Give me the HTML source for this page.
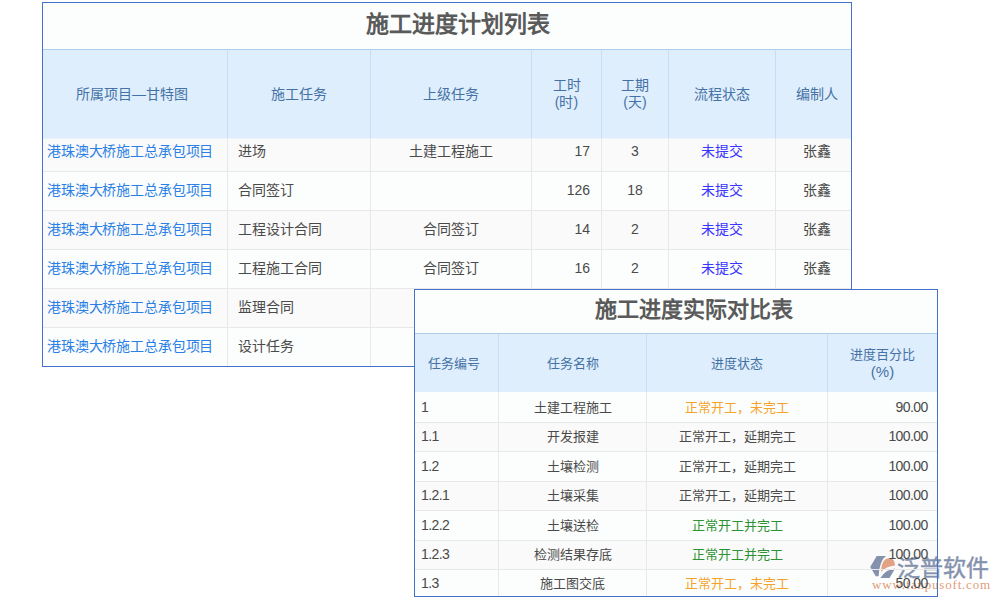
<!DOCTYPE html>
<html lang="zh-CN"><head><meta charset="utf-8">
<style>
html,body{margin:0;padding:0;background:#fff;width:1000px;height:600px;overflow:hidden;position:relative;font-family:"Liberation Sans",sans-serif;}
.a{position:absolute;box-sizing:border-box;}
.c{position:absolute;display:flex;align-items:center;justify-content:center;box-sizing:border-box;color:#4a4a4a;white-space:nowrap;line-height:17px;text-align:center;}
.t1{font-size:14px;}
.t2{font-size:13px;}
.n{font-size:14px;}
.l{justify-content:flex-start;}
.r{justify-content:flex-end;}
.h{color:#4572a6;}
.lk{color:#2a80e6;}
.blu{color:#3a34ff;}
.org{color:#f4a22a;}
.grn{color:#2c9232;}
.ttl{font-weight:bold;color:#5a5a5a;}
</style></head><body>

<div class="a" style="left:42px;top:2px;width:810px;height:365px;background:#fcfefd;"></div>
<div class="a" style="left:43px;top:49px;width:808px;height:89px;background:#dfeefc;"></div>
<div class="a" style="left:43px;top:49px;width:808px;height:1px;background:#acd0ee;"></div>
<div class="a" style="left:43px;top:138px;width:808px;height:33px;background:#fafafa;"></div>
<div class="a" style="left:43px;top:210px;width:808px;height:39px;background:#fafafa;"></div>
<div class="a" style="left:43px;top:288px;width:808px;height:39px;background:#fafafa;"></div>
<div class="a" style="left:43px;top:138px;width:808px;height:1px;background:#ecf4fb;"></div>
<div class="a" style="left:43px;top:171px;width:808px;height:1px;background:#e8e8e8;"></div>
<div class="a" style="left:43px;top:210px;width:808px;height:1px;background:#e8e8e8;"></div>
<div class="a" style="left:43px;top:249px;width:808px;height:1px;background:#e8e8e8;"></div>
<div class="a" style="left:43px;top:288px;width:808px;height:1px;background:#e8e8e8;"></div>
<div class="a" style="left:43px;top:327px;width:808px;height:1px;background:#e8e8e8;"></div>
<div class="a" style="left:227px;top:50px;width:1px;height:88px;background:#c9deef;"></div>
<div class="a" style="left:227px;top:138px;width:1px;height:228px;background:#e8e8e8;"></div>
<div class="a" style="left:370px;top:50px;width:1px;height:88px;background:#c9deef;"></div>
<div class="a" style="left:370px;top:138px;width:1px;height:228px;background:#e8e8e8;"></div>
<div class="a" style="left:531px;top:50px;width:1px;height:88px;background:#c9deef;"></div>
<div class="a" style="left:531px;top:138px;width:1px;height:228px;background:#e8e8e8;"></div>
<div class="a" style="left:601px;top:50px;width:1px;height:88px;background:#c9deef;"></div>
<div class="a" style="left:601px;top:138px;width:1px;height:228px;background:#e8e8e8;"></div>
<div class="a" style="left:668px;top:50px;width:1px;height:88px;background:#c9deef;"></div>
<div class="a" style="left:668px;top:138px;width:1px;height:228px;background:#e8e8e8;"></div>
<div class="a" style="left:775px;top:50px;width:1px;height:88px;background:#c9deef;"></div>
<div class="a" style="left:775px;top:138px;width:1px;height:228px;background:#e8e8e8;"></div>
<div class="a" style="left:42px;top:2px;width:810px;height:365px;background:transparent;border:1px solid #4472c8;"></div>
<div class="c ttl" style="left:43px;top:3px;width:808px;height:46px;font-size:23px;padding-left:22px;padding-bottom:3px;">施工进度计划列表</div>
<div class="c t1 h" style="left:43px;top:50px;width:184px;height:88px;padding-right:6px;">所属项目—甘特图</div>
<div class="c t1 h" style="left:228px;top:50px;width:142px;height:88px;">施工任务</div>
<div class="c t1 h" style="left:371px;top:50px;width:160px;height:88px;">上级任务</div>
<div class="c t1 h" style="left:532px;top:50px;width:69px;height:88px;">工时<br>(时)</div>
<div class="c t1 h" style="left:602px;top:50px;width:66px;height:88px;">工期<br>(天)</div>
<div class="c t1 h" style="left:669px;top:50px;width:106px;height:88px;">流程状态</div>
<div class="c t1 h" style="left:776px;top:50px;width:75px;height:88px;padding-left:6px;">编制人</div>
<div class="c t1 lk l" style="left:43px;top:132px;width:184px;height:39px;padding-left:4px;letter-spacing:-0.15px;">港珠澳大桥施工总承包项目</div>
<div class="c t1 l" style="left:228px;top:132px;width:142px;height:39px;padding-left:10px;">进场</div>
<div class="c t1" style="left:371px;top:132px;width:160px;height:39px;">土建工程施工</div>
<div class="c n r" style="left:532px;top:132px;width:69px;height:39px;padding-right:11px;">17</div>
<div class="c n" style="left:602px;top:132px;width:66px;height:39px;">3</div>
<div class="c t1 blu" style="left:669px;top:132px;width:106px;height:39px;">未提交</div>
<div class="c t1" style="left:776px;top:132px;width:75px;height:39px;padding-left:6px;">张鑫</div>
<div class="c t1 lk l" style="left:43px;top:171px;width:184px;height:39px;padding-left:4px;letter-spacing:-0.15px;">港珠澳大桥施工总承包项目</div>
<div class="c t1 l" style="left:228px;top:171px;width:142px;height:39px;padding-left:10px;">合同签订</div>
<div class="c n r" style="left:532px;top:171px;width:69px;height:39px;padding-right:11px;">126</div>
<div class="c n" style="left:602px;top:171px;width:66px;height:39px;">18</div>
<div class="c t1 blu" style="left:669px;top:171px;width:106px;height:39px;">未提交</div>
<div class="c t1" style="left:776px;top:171px;width:75px;height:39px;padding-left:6px;">张鑫</div>
<div class="c t1 lk l" style="left:43px;top:210px;width:184px;height:39px;padding-left:4px;letter-spacing:-0.15px;">港珠澳大桥施工总承包项目</div>
<div class="c t1 l" style="left:228px;top:210px;width:142px;height:39px;padding-left:10px;">工程设计合同</div>
<div class="c t1" style="left:371px;top:210px;width:160px;height:39px;">合同签订</div>
<div class="c n r" style="left:532px;top:210px;width:69px;height:39px;padding-right:11px;">14</div>
<div class="c n" style="left:602px;top:210px;width:66px;height:39px;">2</div>
<div class="c t1 blu" style="left:669px;top:210px;width:106px;height:39px;">未提交</div>
<div class="c t1" style="left:776px;top:210px;width:75px;height:39px;padding-left:6px;">张鑫</div>
<div class="c t1 lk l" style="left:43px;top:249px;width:184px;height:39px;padding-left:4px;letter-spacing:-0.15px;">港珠澳大桥施工总承包项目</div>
<div class="c t1 l" style="left:228px;top:249px;width:142px;height:39px;padding-left:10px;">工程施工合同</div>
<div class="c t1" style="left:371px;top:249px;width:160px;height:39px;">合同签订</div>
<div class="c n r" style="left:532px;top:249px;width:69px;height:39px;padding-right:11px;">16</div>
<div class="c n" style="left:602px;top:249px;width:66px;height:39px;">2</div>
<div class="c t1 blu" style="left:669px;top:249px;width:106px;height:39px;">未提交</div>
<div class="c t1" style="left:776px;top:249px;width:75px;height:39px;padding-left:6px;">张鑫</div>
<div class="c t1 lk l" style="left:43px;top:288px;width:184px;height:39px;padding-left:4px;letter-spacing:-0.15px;">港珠澳大桥施工总承包项目</div>
<div class="c t1 l" style="left:228px;top:288px;width:142px;height:39px;padding-left:10px;">监理合同</div>
<div class="c t1 lk l" style="left:43px;top:327px;width:184px;height:39px;padding-left:4px;letter-spacing:-0.15px;">港珠澳大桥施工总承包项目</div>
<div class="c t1 l" style="left:228px;top:327px;width:142px;height:39px;padding-left:10px;">设计任务</div>
<div class="a" style="left:414px;top:289px;width:524px;height:308px;background:#fcfefd;"></div>
<div class="a" style="left:415px;top:333px;width:522px;height:59px;background:#dfeefc;"></div>
<div class="a" style="left:415px;top:333px;width:522px;height:1px;background:#acd0ee;"></div>
<div class="a" style="left:415px;top:422px;width:522px;height:29px;background:#fafafa;"></div>
<div class="a" style="left:415px;top:481px;width:522px;height:29px;background:#fafafa;"></div>
<div class="a" style="left:415px;top:540px;width:522px;height:29px;background:#fafafa;"></div>
<div class="a" style="left:866px;top:550px;width:134px;height:46px;">
<svg width="35" height="32" viewBox="0 0 35 32" style="position:absolute;left:0;top:0;overflow:visible">
<path d="M10.7 6.1 L20 6.1 Q13.5 10.5 12.6 26.3 L9.8 26.3 L4.2 17 Z" fill="#8592ad"/>
<path d="M14.9 21.9 Q15.3 9.2 22.8 8 Q28.8 8.3 29.1 15.5 Q20 16.3 14.9 21.9 Z" fill="#e2a283"/>
<path d="M14.4 28 L23.5 28 L29.1 18.4 Q19.5 19.2 14.4 28 Z" fill="#8592ad"/>
</svg>
<div style="position:absolute;left:30.5px;top:3.8px;font-size:23px;line-height:28px;font-weight:400;-webkit-text-stroke:0.45px #8592ad;color:#8592ad;white-space:nowrap;letter-spacing:0px;">泛普软件</div>
<div style="position:absolute;left:6px;top:27.6px;font-family:'Liberation Serif',serif;font-size:13px;line-height:14px;color:#e09c7c;white-space:nowrap;letter-spacing:0.8px;">www.fanpusoft.com</div>
</div>
<div class="a" style="left:415px;top:422px;width:522px;height:1px;background:#e8e8e8;"></div>
<div class="a" style="left:415px;top:451px;width:522px;height:1px;background:#e8e8e8;"></div>
<div class="a" style="left:415px;top:481px;width:522px;height:1px;background:#e8e8e8;"></div>
<div class="a" style="left:415px;top:510px;width:522px;height:1px;background:#e8e8e8;"></div>
<div class="a" style="left:415px;top:540px;width:522px;height:1px;background:#e8e8e8;"></div>
<div class="a" style="left:415px;top:569px;width:522px;height:1px;background:#e8e8e8;"></div>
<div class="a" style="left:498px;top:334px;width:1px;height:58px;background:#c9deef;"></div>
<div class="a" style="left:498px;top:392px;width:1px;height:204px;background:#e8e8e8;"></div>
<div class="a" style="left:646px;top:334px;width:1px;height:58px;background:#c9deef;"></div>
<div class="a" style="left:646px;top:392px;width:1px;height:204px;background:#e8e8e8;"></div>
<div class="a" style="left:827px;top:334px;width:1px;height:58px;background:#c9deef;"></div>
<div class="a" style="left:827px;top:392px;width:1px;height:204px;background:#e8e8e8;"></div>
<div class="a" style="left:414px;top:289px;width:524px;height:308px;background:transparent;border:1px solid #4472c8;"></div>
<div class="c ttl" style="left:415px;top:290px;width:522px;height:43px;font-size:22px;padding-left:36px;padding-bottom:4px;">施工进度实际对比表</div>
<div class="c t2 h" style="left:415px;top:334px;width:83px;height:58px;padding-right:5px;">任务编号</div>
<div class="c t2 h" style="left:499px;top:334px;width:147px;height:58px;">任务名称</div>
<div class="c t2 h" style="left:647px;top:334px;width:180px;height:58px;">进度状态</div>
<div class="c t2 h" style="left:828px;top:334px;width:109px;height:58px;"><div>进度百分比<br><span style="font-size:15px">(%)</span></div></div>
<div class="c n l" style="left:415px;top:392px;width:83px;height:30px;padding-left:6px;letter-spacing:-0.6px;">1</div>
<div class="c t2" style="left:499px;top:392px;width:147px;height:30px;">土建工程施工</div>
<div class="c t2 org" style="left:647px;top:392px;width:180px;height:30px;">正常开工，未完工</div>
<div class="c n r" style="left:828px;top:392px;width:109px;height:30px;padding-right:9.4px;letter-spacing:-0.6px;">90.00</div>
<div class="c n l" style="left:415px;top:422px;width:83px;height:29px;padding-left:6px;letter-spacing:-0.6px;">1.1</div>
<div class="c t2" style="left:499px;top:422px;width:147px;height:29px;">开发报建</div>
<div class="c t2 " style="left:647px;top:422px;width:180px;height:29px;">正常开工，延期完工</div>
<div class="c n r" style="left:828px;top:422px;width:109px;height:29px;padding-right:9.4px;letter-spacing:-0.6px;">100.00</div>
<div class="c n l" style="left:415px;top:451px;width:83px;height:30px;padding-left:6px;letter-spacing:-0.6px;">1.2</div>
<div class="c t2" style="left:499px;top:451px;width:147px;height:30px;">土壤检测</div>
<div class="c t2 " style="left:647px;top:451px;width:180px;height:30px;">正常开工，延期完工</div>
<div class="c n r" style="left:828px;top:451px;width:109px;height:30px;padding-right:9.4px;letter-spacing:-0.6px;">100.00</div>
<div class="c n l" style="left:415px;top:481px;width:83px;height:29px;padding-left:6px;letter-spacing:-0.6px;">1.2.1</div>
<div class="c t2" style="left:499px;top:481px;width:147px;height:29px;">土壤采集</div>
<div class="c t2 " style="left:647px;top:481px;width:180px;height:29px;">正常开工，延期完工</div>
<div class="c n r" style="left:828px;top:481px;width:109px;height:29px;padding-right:9.4px;letter-spacing:-0.6px;">100.00</div>
<div class="c n l" style="left:415px;top:510px;width:83px;height:30px;padding-left:6px;letter-spacing:-0.6px;">1.2.2</div>
<div class="c t2" style="left:499px;top:510px;width:147px;height:30px;">土壤送检</div>
<div class="c t2 grn" style="left:647px;top:510px;width:180px;height:30px;">正常开工并完工</div>
<div class="c n r" style="left:828px;top:510px;width:109px;height:30px;padding-right:9.4px;letter-spacing:-0.6px;">100.00</div>
<div class="c n l" style="left:415px;top:540px;width:83px;height:29px;padding-left:6px;letter-spacing:-0.6px;">1.2.3</div>
<div class="c t2" style="left:499px;top:540px;width:147px;height:29px;">检测结果存底</div>
<div class="c t2 grn" style="left:647px;top:540px;width:180px;height:29px;">正常开工并完工</div>
<div class="c n r" style="left:828px;top:540px;width:109px;height:29px;padding-right:9.4px;letter-spacing:-0.6px;">100.00</div>
<div class="c n l" style="left:415px;top:569px;width:83px;height:29px;padding-left:6px;letter-spacing:-0.6px;">1.3</div>
<div class="c t2" style="left:499px;top:569px;width:147px;height:29px;">施工图交底</div>
<div class="c t2 org" style="left:647px;top:569px;width:180px;height:29px;">正常开工，未完工</div>
<div class="c n r" style="left:828px;top:569px;width:109px;height:29px;padding-right:9.4px;letter-spacing:-0.6px;">50.00</div>
</body></html>
